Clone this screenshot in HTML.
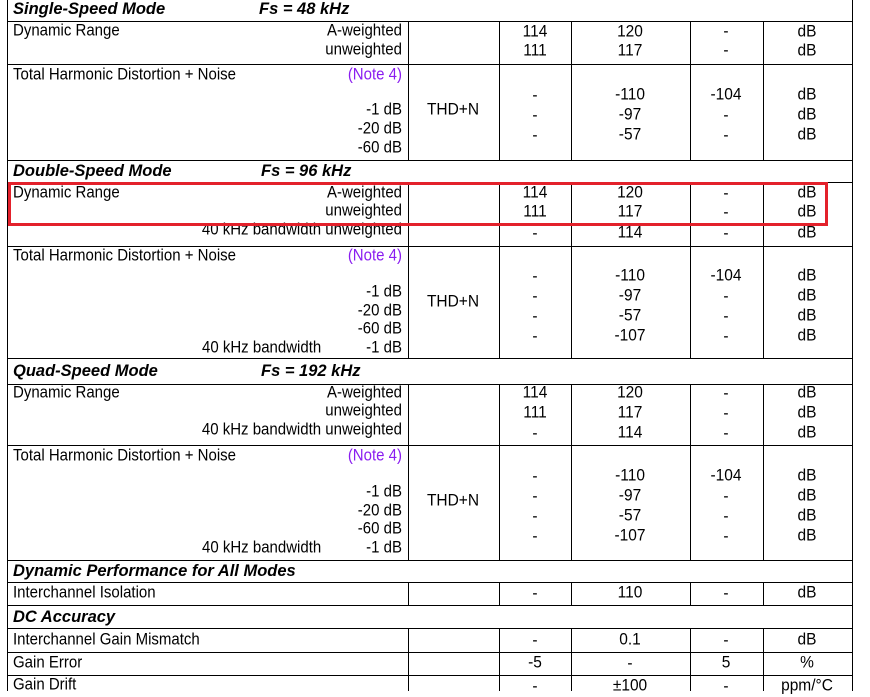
<!DOCTYPE html>
<html><head><meta charset="utf-8"><style>
body{margin:0;width:870px;height:691px;background:#fff;position:relative;overflow:hidden;font-family:"Liberation Sans",Arial,sans-serif;font-size:15px;color:#000}
.h{position:absolute;left:7px;width:846px;height:1px;background:#000}
.v{position:absolute;width:1px;background:#000}
.t,.r,.c{position:absolute;line-height:18px;white-space:nowrap;transform:scaleY(1.08)}
.r{right:468px;text-align:right}
.c{transform:translateX(-50%) scaleY(1.08);font-size:15.5px}
.b{position:absolute;line-height:20px;font-weight:bold;font-style:italic;font-size:16.5px;white-space:nowrap}
.p{color:#8a1cf0}
</style></head><body>
<div class="v" style="left:7px;top:0;height:691px"></div>
<div class="v" style="left:852px;top:0;height:691px"></div>
<div class="v" style="left:408px;top:21px;height:139px"></div><div class="v" style="left:499px;top:21px;height:139px"></div><div class="v" style="left:571px;top:21px;height:139px"></div><div class="v" style="left:690px;top:21px;height:139px"></div><div class="v" style="left:763px;top:21px;height:139px"></div>
<div class="v" style="left:408px;top:182px;height:176px"></div><div class="v" style="left:499px;top:182px;height:176px"></div><div class="v" style="left:571px;top:182px;height:176px"></div><div class="v" style="left:690px;top:182px;height:176px"></div><div class="v" style="left:763px;top:182px;height:176px"></div>
<div class="v" style="left:408px;top:384px;height:176px"></div><div class="v" style="left:499px;top:384px;height:176px"></div><div class="v" style="left:571px;top:384px;height:176px"></div><div class="v" style="left:690px;top:384px;height:176px"></div><div class="v" style="left:763px;top:384px;height:176px"></div>
<div class="v" style="left:408px;top:582px;height:23px"></div><div class="v" style="left:499px;top:582px;height:23px"></div><div class="v" style="left:571px;top:582px;height:23px"></div><div class="v" style="left:690px;top:582px;height:23px"></div><div class="v" style="left:763px;top:582px;height:23px"></div>
<div class="v" style="left:408px;top:628px;height:63px"></div><div class="v" style="left:499px;top:628px;height:63px"></div><div class="v" style="left:571px;top:628px;height:63px"></div><div class="v" style="left:690px;top:628px;height:63px"></div><div class="v" style="left:763px;top:628px;height:63px"></div>
<div class="h" style="top:21px"></div><div class="h" style="top:64px"></div><div class="h" style="top:160px"></div><div class="h" style="top:182px"></div><div class="h" style="top:246px"></div><div class="h" style="top:358px"></div><div class="h" style="top:384px"></div><div class="h" style="top:445px"></div><div class="h" style="top:560px"></div><div class="h" style="top:582px"></div><div class="h" style="top:605px"></div><div class="h" style="top:628px"></div><div class="h" style="top:652px"></div><div class="h" style="top:675px"></div>

<div class="b" style="left:13px;top:-1px">Single-Speed Mode</div><div class="b" style="left:259px;top:-1px">Fs = 48 kHz</div>
<div class="t" style="left:13px;top:22px">Dynamic Range</div>
<div class="r" style="top:22px">A-weighted</div><div class="r" style="top:41px">unweighted</div>
<div class="c" style="left:535px;top:23px">114</div><div class="c" style="left:535px;top:42px">111</div>
<div class="c" style="left:630px;top:23px">120</div><div class="c" style="left:630px;top:42px">117</div>
<div class="c" style="left:726px;top:23px">-</div><div class="c" style="left:726px;top:42px">-</div>
<div class="c" style="left:807px;top:23px">dB</div><div class="c" style="left:807px;top:42px">dB</div>
<div class="t" style="left:13px;top:66px">Total Harmonic Distortion + Noise</div><div class="r p" style="top:66px">(Note 4)</div>
<div class="r" style="top:101px">-1 dB</div><div class="r" style="top:120px">-20 dB</div><div class="r" style="top:139px">-60 dB</div>
<div class="c" style="left:453px;top:101px">THD+N</div>
<div class="c" style="left:535px;top:87px">-</div><div class="c" style="left:535px;top:107px">-</div><div class="c" style="left:535px;top:127px">-</div>
<div class="c" style="left:630px;top:86px">-110</div><div class="c" style="left:630px;top:106px">-97</div><div class="c" style="left:630px;top:126px">-57</div>
<div class="c" style="left:726px;top:86px">-104</div><div class="c" style="left:726px;top:107px">-</div><div class="c" style="left:726px;top:127px">-</div>
<div class="c" style="left:807px;top:86px">dB</div><div class="c" style="left:807px;top:106px">dB</div><div class="c" style="left:807px;top:126px">dB</div>

<div class="b" style="left:13px;top:161px">Double-Speed Mode</div><div class="b" style="left:261px;top:161px">Fs = 96 kHz</div>
<div class="t" style="left:13px;top:184px">Dynamic Range</div>
<div class="r" style="top:184px">A-weighted</div><div class="r" style="top:202px">unweighted</div><div class="r" style="top:221px">40 kHz bandwidth unweighted</div>
<div class="c" style="left:535px;top:184px">114</div><div class="c" style="left:535px;top:203px">111</div><div class="c" style="left:535px;top:225px">-</div>
<div class="c" style="left:630px;top:184px">120</div><div class="c" style="left:630px;top:203px">117</div><div class="c" style="left:630px;top:224px">114</div>
<div class="c" style="left:726px;top:185px">-</div><div class="c" style="left:726px;top:204px">-</div><div class="c" style="left:726px;top:225px">-</div>
<div class="c" style="left:807px;top:184px">dB</div><div class="c" style="left:807px;top:203px">dB</div><div class="c" style="left:807px;top:224px">dB</div>
<div class="t" style="left:13px;top:247px">Total Harmonic Distortion + Noise</div><div class="r p" style="top:247px">(Note 4)</div>
<div class="r" style="top:283px">-1 dB</div><div class="r" style="top:302px">-20 dB</div><div class="r" style="top:320px">-60 dB</div><div class="r" style="top:339px">-1 dB</div><div class="t" style="left:202px;top:339px">40 kHz bandwidth</div>
<div class="c" style="left:453px;top:293px">THD+N</div>
<div class="c" style="left:535px;top:268px">-</div><div class="c" style="left:535px;top:288px">-</div><div class="c" style="left:535px;top:308px">-</div><div class="c" style="left:535px;top:328px">-</div>
<div class="c" style="left:630px;top:267px">-110</div><div class="c" style="left:630px;top:287px">-97</div><div class="c" style="left:630px;top:307px">-57</div><div class="c" style="left:630px;top:327px">-107</div>
<div class="c" style="left:726px;top:267px">-104</div><div class="c" style="left:726px;top:288px">-</div><div class="c" style="left:726px;top:308px">-</div><div class="c" style="left:726px;top:328px">-</div>
<div class="c" style="left:807px;top:267px">dB</div><div class="c" style="left:807px;top:287px">dB</div><div class="c" style="left:807px;top:307px">dB</div><div class="c" style="left:807px;top:327px">dB</div>

<div class="b" style="left:13px;top:361px">Quad-Speed Mode</div><div class="b" style="left:261px;top:361px">Fs = 192 kHz</div>
<div class="t" style="left:13px;top:384px">Dynamic Range</div>
<div class="r" style="top:384px">A-weighted</div><div class="r" style="top:402px">unweighted</div><div class="r" style="top:421px">40 kHz bandwidth unweighted</div>
<div class="c" style="left:535px;top:384px">114</div><div class="c" style="left:535px;top:404px">111</div><div class="c" style="left:535px;top:425px">-</div>
<div class="c" style="left:630px;top:384px">120</div><div class="c" style="left:630px;top:404px">117</div><div class="c" style="left:630px;top:424px">114</div>
<div class="c" style="left:726px;top:385px">-</div><div class="c" style="left:726px;top:405px">-</div><div class="c" style="left:726px;top:425px">-</div>
<div class="c" style="left:807px;top:384px">dB</div><div class="c" style="left:807px;top:404px">dB</div><div class="c" style="left:807px;top:424px">dB</div>
<div class="t" style="left:13px;top:447px">Total Harmonic Distortion + Noise</div><div class="r p" style="top:447px">(Note 4)</div>
<div class="r" style="top:483px">-1 dB</div><div class="r" style="top:502px">-20 dB</div><div class="r" style="top:520px">-60 dB</div><div class="r" style="top:539px">-1 dB</div><div class="t" style="left:202px;top:539px">40 kHz bandwidth</div>
<div class="c" style="left:453px;top:492px">THD+N</div>
<div class="c" style="left:535px;top:468px">-</div><div class="c" style="left:535px;top:488px">-</div><div class="c" style="left:535px;top:508px">-</div><div class="c" style="left:535px;top:528px">-</div>
<div class="c" style="left:630px;top:467px">-110</div><div class="c" style="left:630px;top:487px">-97</div><div class="c" style="left:630px;top:507px">-57</div><div class="c" style="left:630px;top:527px">-107</div>
<div class="c" style="left:726px;top:467px">-104</div><div class="c" style="left:726px;top:488px">-</div><div class="c" style="left:726px;top:508px">-</div><div class="c" style="left:726px;top:528px">-</div>
<div class="c" style="left:807px;top:467px">dB</div><div class="c" style="left:807px;top:487px">dB</div><div class="c" style="left:807px;top:507px">dB</div><div class="c" style="left:807px;top:527px">dB</div>

<div class="b" style="left:13px;top:561px">Dynamic Performance for All Modes</div>
<div class="t" style="left:13px;top:584px">Interchannel Isolation</div>
<div class="c" style="left:535px;top:585px">-</div><div class="c" style="left:630px;top:584px">110</div><div class="c" style="left:726px;top:585px">-</div><div class="c" style="left:807px;top:584px">dB</div>
<div class="b" style="left:13px;top:607px">DC Accuracy</div>
<div class="t" style="left:13px;top:631px">Interchannel Gain Mismatch</div>
<div class="c" style="left:535px;top:632px">-</div><div class="c" style="left:630px;top:631px">0.1</div><div class="c" style="left:726px;top:632px">-</div><div class="c" style="left:807px;top:631px">dB</div>
<div class="t" style="left:13px;top:654px">Gain Error</div>
<div class="c" style="left:535px;top:654px">-5</div><div class="c" style="left:630px;top:655px">-</div><div class="c" style="left:726px;top:654px">5</div><div class="c" style="left:807px;top:654px">%</div>
<div class="t" style="left:13px;top:676px">Gain Drift</div>
<div class="c" style="left:535px;top:678px">-</div><div class="c" style="left:630px;top:677px">±100</div><div class="c" style="left:726px;top:678px">-</div><div class="c" style="left:807px;top:677px">ppm/°C</div>

<div style="position:absolute;left:8px;top:182px;width:814px;height:38px;border:3px solid #e3212b"></div>
</body></html>
